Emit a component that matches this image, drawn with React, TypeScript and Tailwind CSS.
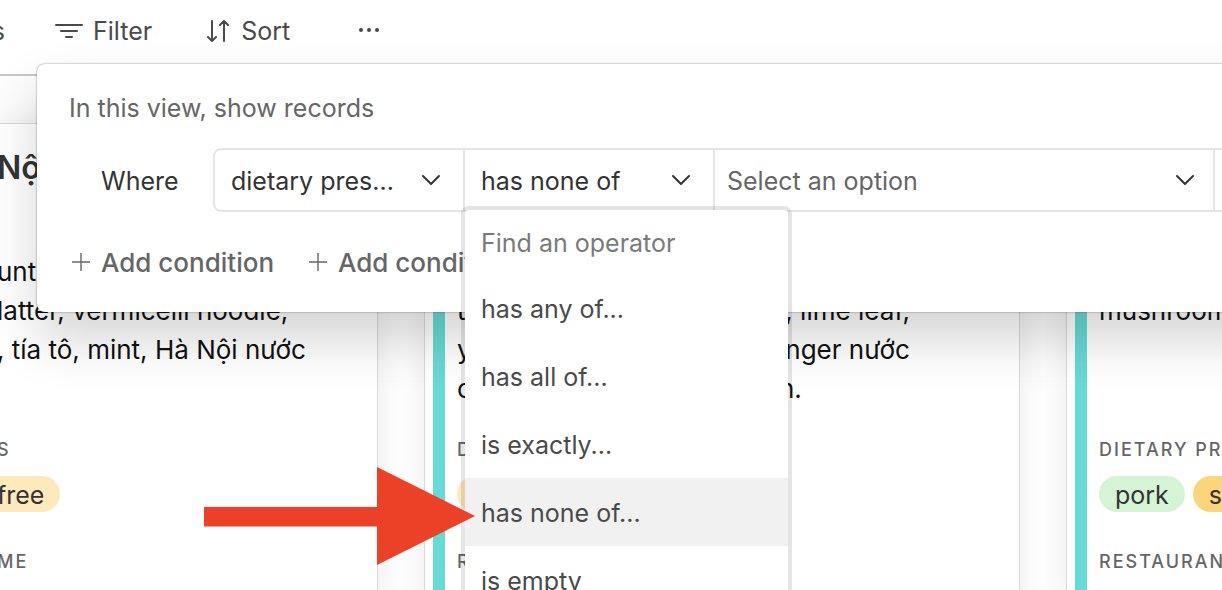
import type { ReactNode } from "react";

function FilterIcon() {
  return (
    <svg width="28" height="18" viewBox="0 0 28 18" fill="none" stroke="currentColor" strokeWidth="2" strokeLinecap="round" aria-hidden="true">
      <path d="M1 2h26M6 8h16M11 14h6" />
    </svg>
  );
}

function SortIcon() {
  return (
    <svg width="24" height="24" viewBox="0 0 24 24" fill="none" stroke="currentColor" strokeWidth="2" strokeLinecap="round" strokeLinejoin="round" aria-hidden="true">
      <path d="M6 1v20M2 17l4 4 4-4M18 21V1M14 5l4-4 4 4" />
    </svg>
  );
}

function DotsIcon() {
  return (
    <svg width="22" height="8" viewBox="0 0 22 8" fill="currentColor" aria-hidden="true">
      <circle cx="3" cy="2" r="2" />
      <circle cx="11" cy="2" r="2" />
      <circle cx="19" cy="2" r="2" />
    </svg>
  );
}

function PlusIcon() {
  return (
    <svg width="20" height="20" viewBox="0 0 20 20" fill="none" stroke="currentColor" strokeWidth="1.4" aria-hidden="true">
      <path d="M10 1v18M1 10h18" />
    </svg>
  );
}

function Chevron() {
  return (
    <svg className="pointer-events-none absolute top-6 right-[22px] text-[#333333] in-[.wide]:right-[18px]" width="20" height="12" viewBox="0 0 20 12" fill="none" stroke="currentColor" strokeWidth="2" strokeLinecap="round" strokeLinejoin="round" aria-hidden="true">
      <path d="M2 2l8 8 8-8" />
    </svg>
  );
}

function SelectCell({ label, value, className, selectClass, children }: { label: string; value: string; className: string; selectClass: string; children?: ReactNode }) {
  return (
    <div className={`relative shrink-0 border-r-2 border-[#e5e5e5] ${className}`}>
      <select aria-label={label} className={`h-full w-full appearance-none bg-transparent pt-1 pr-12 outline-none ${selectClass}`}>
        <option>{value}</option>
      </select>
      <Chevron />
      {children}
    </div>
  );
}

const operators = ["has any of...", "has all of...", "is exactly...", "has none of...", "is empty"];

function OperatorMenu() {
  return (
    <div className="absolute top-14 -left-1 z-10 w-[331px] rounded-lg border-4 border-black/10 bg-white bg-clip-padding">
      <input
        type="text"
        aria-label="Find an operator"
        placeholder="Find an operator"
        className="block h-16 w-full px-4 pt-0.5 outline-none placeholder:text-[#7a7a7a]"
      />
      <ul role="listbox" aria-label="Operators" className="text-[#4a4a4a]">
        {operators.map((name) => (
          <li key={name}>
            <button
              type="button"
              role="option"
              aria-selected={name === "has none of..."}
              className="block h-[68px] w-full px-4 pt-1 text-left aria-selected:bg-[#f1f1f1]"
            >
              {name}
            </button>
          </li>
        ))}
      </ul>
    </div>
  );
}

function AddButton() {
  return (
    <button type="button" className="flex items-center gap-2.5 text-[26px] font-medium text-[#666666]">
      <PlusIcon />
      Add condition
    </button>
  );
}

function FilterPanel() {
  return (
    <section aria-label="Filter" className="absolute top-16 -right-16 left-[37px] rounded-lg bg-white px-8 pt-6 pb-[30px] text-[#333333] shadow-[0_0_2px_rgba(0,0,0,0.5),0_28px_52px_rgba(0,0,0,0.17)]">
      <p className="leading-10 text-[#666666]">In this view, show records</p>
      <div className="mt-5 flex h-16 items-center">
        <span className="w-36 shrink-0 pt-1 pl-8">Where</span>
        <div className="flex h-16 flex-1 rounded-lg border-2 border-[#e5e5e5]">
          <SelectCell label="Field" value="dietary pres..." className="w-[250px]" selectClass="pl-4" />
          <SelectCell label="Operator" value="has none of" className="w-[250px]" selectClass="pl-4">
            <OperatorMenu />
          </SelectCell>
          <SelectCell label="Value" value="Select an option" className="wide w-[500px] text-[#666666]" selectClass="pl-3" />
        </div>
      </div>
      <div className="mt-[30px] flex h-10 items-center gap-[34px] pl-0.5">
        <AddButton />
        <AddButton />
      </div>
    </section>
  );
}

function Card({ className, title, lines, labels, children }: { className: string; title: string; lines: string[][]; labels: string[]; children: ReactNode }) {
  return (
    <article className={`shrink-0 border border-[#d9d9d9] bg-white shadow-[0_0_24px_rgba(0,0,0,0.07)] ${className}`}>
      <h2 className="h-32 pt-6 text-[32px] leading-10 font-semibold text-[#333333]">{title}</h2>
      <div className="h-[156px] text-[26px] leading-[39px] whitespace-nowrap text-[#111111]">
        {lines.map((line, i) => (
          <p key={i} className="grid h-[39px] grid-cols-[322px_1fr]">
            {line.map((part, j) => (
              <span key={j}>{part}</span>
            ))}
          </p>
        ))}
      </div>
      <h3 className="mt-8 text-lg leading-5 font-medium tracking-[2px] whitespace-nowrap text-[#666666]">{labels[0]}</h3>
      <div className="mt-4 flex h-9 gap-2 text-[25px] leading-[38px] text-[#333333]">{children}</div>
      <h3 className="mt-10 text-lg leading-5 font-medium tracking-[2px] whitespace-nowrap text-[#666666]">{labels[1]}</h3>
    </article>
  );
}

export default function App() {
  return (
    <main className="relative flex h-screen flex-col overflow-hidden bg-white font-['Inter',sans-serif] text-[25px]">
      <header className="flex h-[76px] shrink-0 items-center border-b-2 border-[#c6c6c6] pb-2.5 text-[#4a4a4a]">
        <span className="flex w-[5px] shrink-0 justify-end overflow-hidden">s</span>
        <button type="button" className="ml-[50px] flex items-center gap-2.5">
          <FilterIcon />
          Filter
        </button>
        <button type="button" className="ml-[54px] flex items-center gap-[11px]">
          <SortIcon />
          Sort
        </button>
        <button type="button" aria-label="More" className="ml-[68px]">
          <DotsIcon />
        </button>
      </header>

      <div className="-mb-4 -ml-[3px] flex flex-1 gap-[46px] bg-[#fdfdfd] pt-[47px]">
        <Card
          className="w-[381px] border-l-0"
          title="Nội"
          lines={[["unt"], ["latter, vermicelli noodle,"], [", tía tô, mint, Hà Nội nước"]]}
          labels={["S", "ME"]}
        >
          <span className="rounded-r-full bg-[#fee9bb] pr-4">free</span>
        </Card>
        <div className="relative flex w-[596px] shrink-0">
          <Card
            className="w-full pl-8"
            title=""
            lines={[[], ["t", "l, lime leaf,"], ["y", "inger nước"], ["c", "n."]]}
            labels={["D", "R"]}
          >
            <span className="w-24 rounded-full bg-[#fee9bb]" />
          </Card>
          <span className="absolute inset-y-0 left-[9px] w-3 bg-[#66dad4]" />
        </div>
        <div className="relative flex w-[596px] shrink-0">
          <Card
            className="w-full pl-8"
            title=""
            lines={[[], ["mushroom"]]}
            labels={["DIETARY PRESENT", "RESTAURANT NAME"]}
          >
            <span className="rounded-full bg-[#d5f4d6] px-4">pork</span>
            <span className="rounded-full bg-[#fad57c] px-4">soy</span>
          </Card>
          <span className="absolute inset-y-0 left-[9px] w-3 bg-[#66dad4]" />
        </div>
      </div>

      <FilterPanel />

      <svg className="pointer-events-none absolute top-[467px] left-[204px] z-20" width="272" height="98" viewBox="0 0 272 98" aria-hidden="true">
        <path d="M0 40h173V0l98 49-98 49V59.500H0z" fill="#ec4027" />
      </svg>
    </main>
  );
}
